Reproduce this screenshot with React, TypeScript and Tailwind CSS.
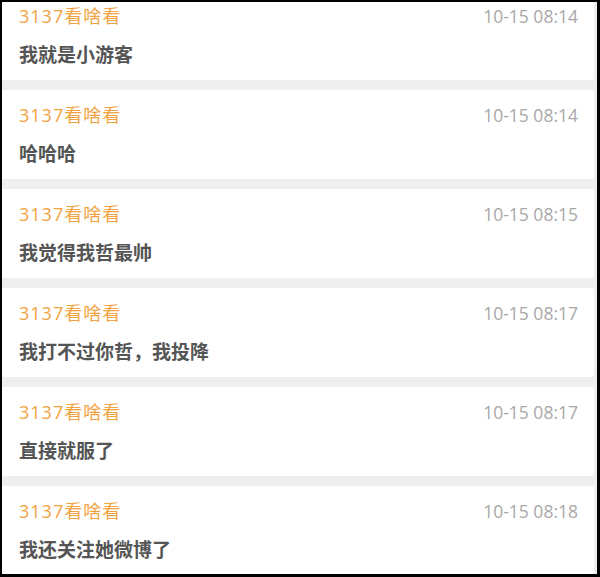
import React from 'react';

type Comment = {
  name: string;
  time: string;
  text: string;
};

const comments: Comment[] = [
  { name: '3137看啥看', time: '10-15 08:14', text: '我就是小游客' },
  { name: '3137看啥看', time: '10-15 08:14', text: '哈哈哈' },
  { name: '3137看啥看', time: '10-15 08:15', text: '我觉得我哲最帅' },
  { name: '3137看啥看', time: '10-15 08:17', text: '我打不过你哲，我投降' },
  { name: '3137看啥看', time: '10-15 08:17', text: '直接就服了' },
  { name: '3137看啥看', time: '10-15 08:18', text: '我还关注她微博了' },
];

// 单条评论卡片
const CommentCard: React.FC<{ item: Comment }> = ({ item }) => {
  return (
    <div className="h-[89px] shrink-0 bg-white rounded-r-[3px] pl-[17px] pr-[16px] pt-[13px]">
      <div className="flex items-center justify-between h-[24px]">
        <span className="text-[18px] leading-[24px] tracking-[1px] text-[#f2a341]">{item.name}</span>
        <span className="text-[17.5px] leading-[24px] text-[#a8a8a8]">{item.time}</span>
      </div>
      <div className="mt-[14px] text-[19px] leading-[26px] font-bold text-[#555555]">{item.text}</div>
    </div>
  );
};

const App: React.FC = () => {
  return (
    <div
      className="w-[600px] h-[577px] bg-black pt-[2px] pl-[2px] pr-[3px] pb-[3px]"
      style={{ fontFamily: '"Open Sans", "Noto Sans CJK SC", sans-serif' }}
    >
      <div className="h-full bg-[#efefef] overflow-hidden pr-[3px]">
        <div className="flex flex-col gap-[10px] -mt-[11px]">
          {comments.map((c, i) => (
            <CommentCard key={i} item={c} />
          ))}
        </div>
      </div>
    </div>
  );
};

export default App;
